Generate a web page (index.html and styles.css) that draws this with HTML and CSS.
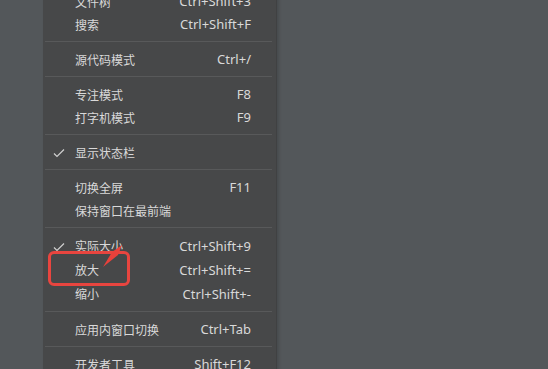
FILE: index.html
```html
<!DOCTYPE html>
<html lang="zh">
<head>
<meta charset="utf-8">
<link rel="stylesheet" href="styles.css">
</head>
<body>
<div class="menu">
  <div class="row"><span class="check"></span><span class="label">文件树</span><span class="key">Ctrl+Shift+3</span></div>
  <div class="row"><span class="check"></span><span class="label">搜索</span><span class="key">Ctrl+Shift+F</span></div>
  <div class="sep"></div>
  <div class="row"><span class="check"></span><span class="label">源代码模式</span><span class="key">Ctrl+/</span></div>
  <div class="sep"></div>
  <div class="row"><span class="check"></span><span class="label">专注模式</span><span class="key">F8</span></div>
  <div class="row"><span class="check"></span><span class="label">打字机模式</span><span class="key">F9</span></div>
  <div class="sep"></div>
  <div class="row"><span class="check"><svg viewBox="0 0 12 10" width="12" height="10"><polyline points="1,5.5 4,8.5 11,1.5" fill="none" stroke="#cfcfcf" stroke-width="1.2"/></svg></span><span class="label">显示状态栏</span><span class="key"></span></div>
  <div class="sep"></div>
  <div class="row"><span class="check"></span><span class="label">切换全屏</span><span class="key">F11</span></div>
  <div class="row"><span class="check"></span><span class="label">保持窗口在最前端</span><span class="key"></span></div>
  <div class="sep"></div>
  <div class="row tall"><span class="check"><svg viewBox="0 0 12 10" width="12" height="10"><polyline points="1,5.5 4,8.5 11,1.5" fill="none" stroke="#cfcfcf" stroke-width="1.2"/></svg></span><span class="label">实际大小</span><span class="key">Ctrl+Shift+9</span></div>
  <div class="row tall"><span class="check"></span><span class="label">放大</span><span class="key">Ctrl+Shift+=</span></div>
  <div class="row tall"><span class="check"></span><span class="label">缩小</span><span class="key">Ctrl+Shift+-</span></div>
  <div class="sep"></div>
  <div class="row"><span class="check"></span><span class="label">应用内窗口切换</span><span class="key">Ctrl+Tab</span></div>
  <div class="sep"></div>
  <div class="row"><span class="check"></span><span class="label">开发者工具</span><span class="key">Shift+F12</span></div>
</div>
<div class="highlight"></div>
<svg class="pointer" width="30" height="30" viewBox="0 0 30 30"><polygon points="3,23 12,8 22,1 18,11" fill="#e8413b"/></svg>
</body>
</html>
```
FILE: styles.css
```css
html, body {
  margin: 0;
  padding: 0;
  width: 548px;
  height: 369px;
  overflow: hidden;
  background: #53575a;
  font-family: "Noto Sans CJK SC", "Noto Sans", sans-serif;
}
.menu {
  margin-left: 43px;
  margin-top: -10px;
  width: 233px;
  background: #474849;
  border-right: 1px solid #404142;
  box-shadow: 2px 0 3px rgba(0,0,0,0.15);
  display: flex;
  flex-direction: column;
}
.row {
  height: 23px;
  display: flex;
  align-items: center;
  color: #d9d9d9;
}
.row.tall { height: 24px; }
.check {
  width: 30px;
  display: flex;
  justify-content: flex-end;
  padding-right: 8px;
  box-sizing: border-box;
  padding-top: 1px;
}
.label {
  flex: 1;
  padding-left: 2px;
  font-size: 12px;
  line-height: 1;
}
.key {
  font-family: "Noto Sans", sans-serif;
  font-size: 13px;
  line-height: 1;
  padding-right: 25px;
  color: #d9d9d9;
}
.sep {
  height: 12px;
  padding-top: 5px;
  box-sizing: border-box;
  padding-left: 2px;
  padding-right: 4px;
}
.sep::before {
  content: "";
  display: block;
  height: 1px;
  background: #58595a;
}
.highlight {
  position: absolute;
  left: 48px;
  top: 251px;
  width: 82px;
  height: 35px;
  box-sizing: border-box;
  border: 3px solid #e8453f;
  border-radius: 6px;
}
.pointer {
  position: absolute;
  left: 100px;
  top: 244px;
}
```
